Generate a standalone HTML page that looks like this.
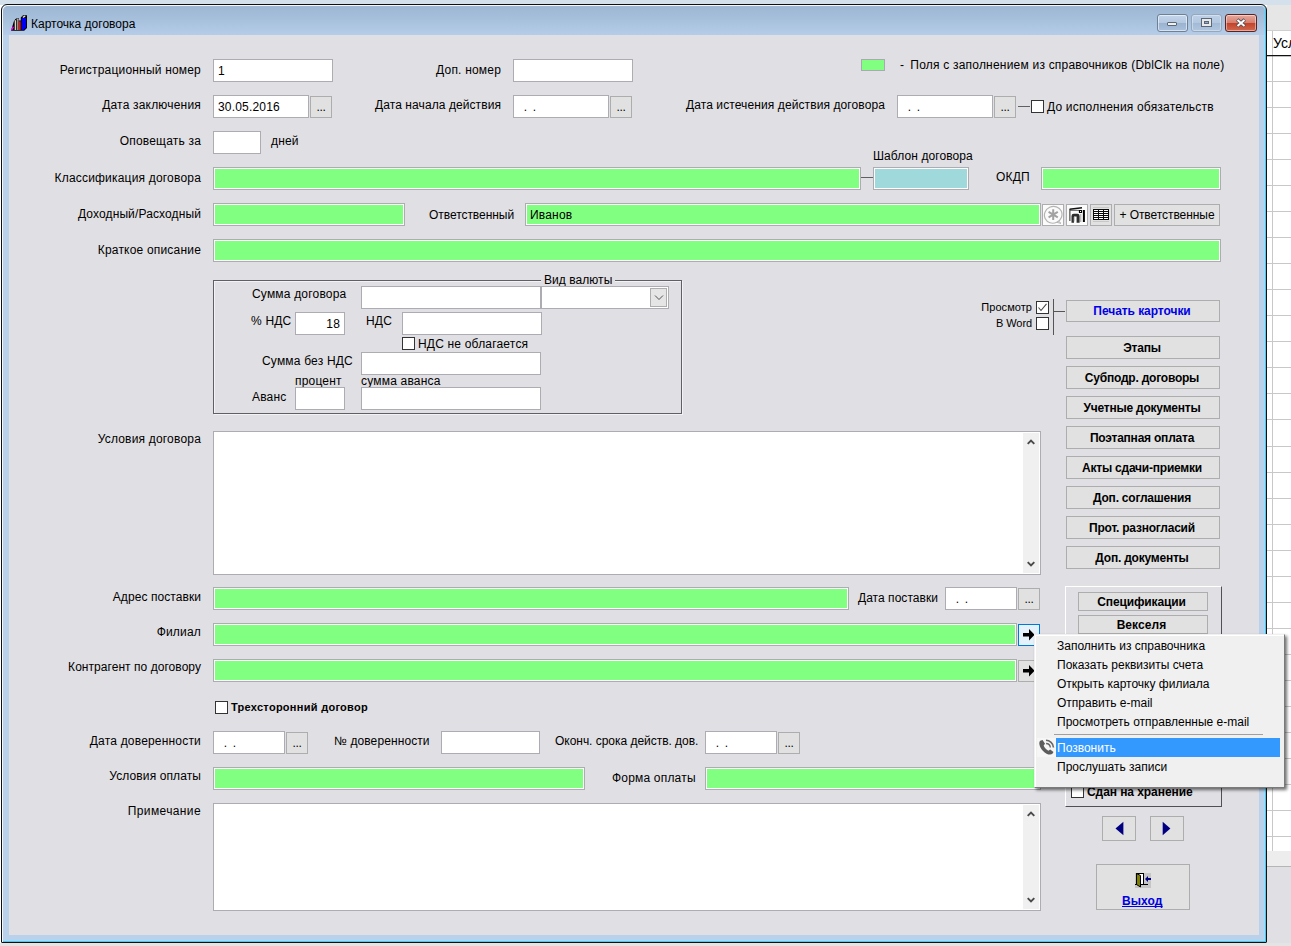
<!DOCTYPE html>
<html lang="ru">
<head>
<meta charset="utf-8">
<title>Карточка договора</title>
<style>
html,body{margin:0;padding:0;}
body{width:1291px;height:946px;overflow:hidden;background:#fff;font-family:"Liberation Sans",sans-serif;font-size:12px;color:#000;position:relative;}
#root{position:absolute;left:0;top:0;width:1291px;height:946px;overflow:hidden;}
.abs{position:absolute;}
.t{position:absolute;white-space:nowrap;height:14px;line-height:14px;font-size:12px;letter-spacing:.19px;}
.in{position:absolute;box-sizing:border-box;border:1px solid #acacb2;background:#fff;white-space:nowrap;overflow:hidden;font-size:12px;line-height:22px;padding-left:4px;letter-spacing:.19px;}
.g{background:#80ff80;box-shadow:inset 0 0 0 1px #fff;}
.bt{position:absolute;box-sizing:border-box;border:1px solid #adadad;background:#e1e1e1;text-align:center;white-space:nowrap;font-size:12px;overflow:hidden;letter-spacing:.19px;}
.cb{position:absolute;box-sizing:border-box;width:13px;height:13px;border:1px solid #333;background:#fff;}
.mi{position:absolute;left:22px;white-space:nowrap;font-size:12px;height:16px;line-height:16px;color:#000;}
.b{font-weight:bold;letter-spacing:-.22px;}
.d{letter-spacing:1.17px;margin-left:5.8px;}
.e{letter-spacing:-.33px;}
</style>
</head>
<body>
<div id="root">
<div class="" style="position:absolute;left:0px;top:0px;width:1291px;height:5px;background:#d5e0ed"></div>
<div class="" style="position:absolute;left:1267px;top:5px;width:24px;height:26px;background:#e6e6e6"></div>
<div class="" style="position:absolute;left:1267px;top:31px;width:24px;height:820px;background:#fff"></div>
<div class="" style="position:absolute;left:1267px;top:851px;width:24px;height:15px;background:#ededed"></div>
<div class="" style="position:absolute;left:1267px;top:866px;width:24px;height:1px;background:#b5b5b5"></div>
<div class="" style="position:absolute;left:1267px;top:867px;width:24px;height:79px;background:#e0dfe3"></div>
<div class="" style="position:absolute;left:0px;top:943px;width:1291px;height:3px;background:#e4e4e4"></div>
<div class="" style="position:absolute;left:1272px;top:31px;width:1px;height:820px;background:#c8c8c8"></div>
<div class="" style="position:absolute;left:1267px;top:81px;width:24px;height:1px;background:#c8c8c8"></div>
<div class="" style="position:absolute;left:1267px;top:107px;width:24px;height:1px;background:#c8c8c8"></div>
<div class="" style="position:absolute;left:1267px;top:133px;width:24px;height:1px;background:#c8c8c8"></div>
<div class="" style="position:absolute;left:1267px;top:159px;width:24px;height:1px;background:#c8c8c8"></div>
<div class="" style="position:absolute;left:1267px;top:185px;width:24px;height:1px;background:#c8c8c8"></div>
<div class="" style="position:absolute;left:1267px;top:211px;width:24px;height:1px;background:#c8c8c8"></div>
<div class="" style="position:absolute;left:1267px;top:237px;width:24px;height:1px;background:#c8c8c8"></div>
<div class="" style="position:absolute;left:1267px;top:263px;width:24px;height:1px;background:#c8c8c8"></div>
<div class="" style="position:absolute;left:1267px;top:289px;width:24px;height:1px;background:#c8c8c8"></div>
<div class="" style="position:absolute;left:1267px;top:315px;width:24px;height:1px;background:#c8c8c8"></div>
<div class="" style="position:absolute;left:1267px;top:341px;width:24px;height:1px;background:#c8c8c8"></div>
<div class="" style="position:absolute;left:1267px;top:367px;width:24px;height:1px;background:#c8c8c8"></div>
<div class="" style="position:absolute;left:1267px;top:393px;width:24px;height:1px;background:#c8c8c8"></div>
<div class="" style="position:absolute;left:1267px;top:419px;width:24px;height:1px;background:#c8c8c8"></div>
<div class="" style="position:absolute;left:1267px;top:446px;width:24px;height:1px;background:#c8c8c8"></div>
<div class="" style="position:absolute;left:1267px;top:472px;width:24px;height:1px;background:#c8c8c8"></div>
<div class="" style="position:absolute;left:1267px;top:498px;width:24px;height:1px;background:#c8c8c8"></div>
<div class="" style="position:absolute;left:1267px;top:524px;width:24px;height:1px;background:#c8c8c8"></div>
<div class="" style="position:absolute;left:1267px;top:550px;width:24px;height:1px;background:#c8c8c8"></div>
<div class="" style="position:absolute;left:1267px;top:576px;width:24px;height:1px;background:#c8c8c8"></div>
<div class="" style="position:absolute;left:1267px;top:602px;width:24px;height:1px;background:#c8c8c8"></div>
<div class="" style="position:absolute;left:1267px;top:628px;width:24px;height:1px;background:#c8c8c8"></div>
<div class="" style="position:absolute;left:1267px;top:654px;width:24px;height:1px;background:#c8c8c8"></div>
<div class="" style="position:absolute;left:1267px;top:680px;width:24px;height:1px;background:#c8c8c8"></div>
<div class="" style="position:absolute;left:1267px;top:706px;width:24px;height:1px;background:#c8c8c8"></div>
<div class="" style="position:absolute;left:1267px;top:732px;width:24px;height:1px;background:#c8c8c8"></div>
<div class="" style="position:absolute;left:1267px;top:758px;width:24px;height:1px;background:#c8c8c8"></div>
<div class="" style="position:absolute;left:1267px;top:784px;width:24px;height:1px;background:#c8c8c8"></div>
<div class="" style="position:absolute;left:1267px;top:810px;width:24px;height:1px;background:#c8c8c8"></div>
<div class="" style="position:absolute;left:1267px;top:836px;width:24px;height:1px;background:#c8c8c8"></div>
<div class="" style="position:absolute;left:1267px;top:55px;width:24px;height:1px;background:#111"></div>
<div class="" style="position:absolute;left:1267px;top:56px;width:24px;height:1px;background:rgba(0,0,0,.25)"></div>
<div class="" style="position:absolute;left:1267px;top:30px;width:24px;height:1px;background:#cfcfcf"></div>
<span class="abs" style="left:1273px;top:34px;font-size:14px;line-height:18px;white-space:nowrap">Усл</span>
<div class="abs" style="left:1px;top:4px;width:1266px;height:939px;box-sizing:border-box;border:1px solid #111;border-radius:6px 6px 1px 1px;background:#b9d1ea;box-shadow:inset 1px 1px 0 #f4f8fc, inset -1px -1px 0 #3fcdf5;"></div>
<div class="abs" style="left:3px;top:6px;width:1262px;height:29px;border-radius:5px 5px 0 0;background:linear-gradient(#9db6d3 0%,#a6bfdb 45%,#b5cde8 100%);"></div>
<div class="" style="position:absolute;left:9px;top:35px;width:1250px;height:900px;background:#e0dfe3"></div>
<svg class="abs" style="left:11px;top:15px" width="17" height="17" viewBox="0 0 17 17">
<path d="M0 15.7 L2.8 6.5 L4.2 4.3 L5.6 3.3 L8 3.3 L8 5.6 L9.8 5.6 L9.8 2.5 L12 0.2 L16 0.2 L16 13 L13.2 15.7 Z" fill="#000"/>
<rect x="3.7" y="5.2" width="1.5" height="9.8" fill="#ddd5cc"/>
<rect x="6" y="4.4" width="1.6" height="10.6" fill="#9a9088"/>
<rect x="5.6" y="3.7" width="2" height="0.9" fill="#e8e0d8"/>
<rect x="8" y="6.3" width="1.6" height="8.7" fill="#ff1010"/>
<path d="M10.6 3 H15 V12.6 L12.7 15 H10.6Z" fill="#0000f0"/>
<path d="M11.8 2.4 L14.2 1.1" stroke="#e8e0d8" stroke-width="1.2"/>
<path d="M0.5 15.3 L2.3 11.7" stroke="#ff00ff" stroke-width="1.4"/>
</svg>
<span class="abs" style="left:31px;top:17px;font-size:12px;line-height:14px;white-space:nowrap">Карточка договора</span>
<div class="abs" style="left:1157px;top:14px;width:31px;height:18px;box-sizing:border-box;border:1px solid #6d8196;border-radius:3px;background:linear-gradient(#c4d5e9 0%,#b4c8e0 48%,#9ab3d0 52%,#aac1dc 100%);box-shadow:inset 0 0 0 1px rgba(255,255,255,.55)"><div class="abs" style="left:9px;top:7px;width:8px;height:2px;background:#f0f0f0;border:1px solid #5a6776;border-radius:1px"></div></div>
<div class="abs" style="left:1191px;top:14px;width:31px;height:18px;box-sizing:border-box;border:1px solid #93a7bd;border-radius:3px;background:linear-gradient(#bdd0e6 0%,#b3c8e0 48%,#a3bad6 52%,#b0c6df 100%);box-shadow:inset 0 0 0 1px rgba(255,255,255,.35)"><svg class="abs" style="left:9px;top:3px" width="12" height="10" viewBox="0 0 12 10"><rect x="0.5" y="0.5" width="10" height="8" fill="#e9e9e9" stroke="#5a6776"/><rect x="3.5" y="3.5" width="4" height="2" fill="#8fa8cc" stroke="#5a6776"/></svg></div>
<div class="abs" style="left:1225px;top:14px;width:32px;height:18px;box-sizing:border-box;border:1px solid #5c2222;border-radius:3px;background:linear-gradient(#e5a99c 0%,#d67f70 48%,#c3432b 52%,#d0694f 100%);box-shadow:inset 0 0 0 1px rgba(255,255,255,.45)"><svg class="abs" style="left:9px;top:3px" width="12" height="10" viewBox="0 0 12 10"><path d="M2.2 1.6 L9.8 8.2 M9.8 1.6 L2.2 8.2" stroke="#4a4a55" stroke-width="3.4"/><path d="M2.5 1.9 L9.5 7.9 M9.5 1.9 L2.5 7.9" stroke="#fff" stroke-width="2"/></svg></div>
<span class="t " style="right:1090px;top:63px;">Регистрационный номер</span>
<div class="in " style="left:213px;top:59px;width:120px;height:23px;">1</div>
<span class="t " style="right:790px;top:63px;">Доп. номер</span>
<div class="in " style="left:513px;top:59px;width:120px;height:23px;"></div>
<div class="" style="position:absolute;left:861px;top:59px;width:24px;height:12px;background:#80ff80;border:1px solid #a9a9b4;box-sizing:border-box"></div>
<span class="t " style="left:900px;top:58px;letter-spacing:.21px">-&nbsp; <span style="margin-left:-1px">Поля с заполнением из справочников (DblClk на поле)</span></span>
<span class="t " style="right:1090px;top:98px;">Дата заключения</span>
<div class="in " style="left:213px;top:95px;width:96px;height:23px;">30.05.2016</div>
<div class="bt " style="left:310px;top:96px;width:22px;height:22px;line-height:20px;"><span class="e">...</span></div>
<span class="t " style="right:790px;top:98px;letter-spacing:0.08px">Дата начала действия</span>
<div class="in " style="left:513px;top:95px;width:96px;height:23px;"><span class="d">.&nbsp;.</span></div>
<div class="bt " style="left:610px;top:96px;width:22px;height:22px;line-height:20px;"><span class="e">...</span></div>
<span class="t " style="right:406px;top:98px;letter-spacing:0.1px">Дата истечения действия договора</span>
<div class="in " style="left:897px;top:95px;width:96px;height:23px;"><span class="d">.&nbsp;.</span></div>
<div class="bt " style="left:994px;top:96px;width:22px;height:22px;line-height:20px;"><span class="e">...</span></div>
<div class="" style="position:absolute;left:1018px;top:106px;width:12px;height:1px;background:#606060"></div>
<div class="cb" style="left:1031px;top:100px"></div>
<span class="t " style="left:1047px;top:100px;">До исполнения обязательств</span>
<span class="t " style="right:1090px;top:134px;">Оповещать за</span>
<div class="in " style="left:213px;top:131px;width:48px;height:23px;"></div>
<span class="t " style="left:271px;top:134px;">дней</span>
<span class="t " style="right:1090px;top:171px;">Классификация договора</span>
<div class="in g" style="left:213px;top:167px;width:648px;height:23px;"></div>
<div class="" style="position:absolute;left:861px;top:177px;width:12px;height:1px;background:#606060"></div>
<span class="t " style="left:873px;top:149px;letter-spacing:.09px">Шаблон договора</span>
<div class="in " style="left:873px;top:167px;width:96px;height:23px;background:#9fd9dc;box-shadow:inset 0 0 0 1px #fff"></div>
<span class="t " style="left:996px;top:170px;">ОКДП</span>
<div class="in g" style="left:1041px;top:167px;width:180px;height:23px;"></div>
<span class="t " style="right:1090px;top:207px;letter-spacing:0.12px">Доходный/Расходный</span>
<div class="in g" style="left:213px;top:203px;width:192px;height:23px;"></div>
<span class="t " style="left:429px;top:208px;letter-spacing:-.05px">Ответственный</span>
<div class="in g" style="left:525px;top:203px;width:516px;height:23px;">Иванов</div>
<div class="bt " style="left:1042px;top:204px;width:22px;height:22px;line-height:20px;background:#fbfbfb"><svg class="abs" style="left:0;top:0" width="20" height="20" viewBox="0 0 20 20"><path d="M15.2 15.6 L18 18.4 L13.2 17.2" fill="#fbfbfb" stroke="#b4b4b4" stroke-width="1"/><ellipse cx="10.2" cy="9.8" rx="8.9" ry="8.3" transform="rotate(-25 10.2 9.8)" fill="#fbfbfb" stroke="#b4b4b4" stroke-width="1.2"/><path d="M10.2 4.2 V15 M5.6 6.9 L14.8 12.3 M14.8 6.9 L5.6 12.3" stroke="#a2a2a2" stroke-width="2"/></svg></div>
<div class="bt " style="left:1066px;top:204px;width:22px;height:22px;line-height:20px;background:#fbfbfb"><svg class="abs" style="left:0;top:0" width="20" height="20" viewBox="0 0 20 20"><path d="M2.9 4.2 V16" stroke="#222" stroke-width="1"/><path d="M2.6 4.3 L15 2.7" stroke="#111" stroke-width="1.4"/><path d="M3 5.4 H12" stroke="#444" stroke-width=".8"/><rect x="15.9" y="5" width="2" height="12" fill="#000"/><rect x="11.9" y="5" width="3.2" height="3" fill="#000"/><rect x="13" y="6" width="1" height="1" fill="#fff"/><path d="M4.5 17.8 V11 Q4.5 8.8 6.8 8.8 H10.5 Q12.6 8.8 12.6 11 V17.8 H9.6 V11.5 H7 V17.8Z" fill="#2e2e2e"/><path d="M7 12 V16.5 M13.8 9 V17" stroke="#888" stroke-width=".8"/></svg></div>
<div class="bt " style="left:1090px;top:204px;width:22px;height:22px;line-height:20px;"><svg class="abs" style="left:0;top:0" width="20" height="20" viewBox="0 0 20 20" shape-rendering="crispEdges"><rect x="2" y="2" width="16" height="1" fill="#c8c8c8"/><rect x="2" y="16" width="16" height="1" fill="#c8c8c8"/><rect x="2" y="4" width="16" height="11" fill="#0a0a0a"/><g fill="#fff"><rect x="3" y="5" width="4" height="1"/><rect x="8" y="5" width="4" height="1"/><rect x="13" y="5" width="4" height="1"/><rect x="3" y="7" width="4" height="1"/><rect x="8" y="7" width="4" height="1"/><rect x="13" y="7" width="4" height="1"/><rect x="3" y="9" width="4" height="1"/><rect x="8" y="9" width="4" height="1"/><rect x="13" y="9" width="4" height="1"/><rect x="3" y="11" width="4" height="1"/><rect x="8" y="11" width="4" height="1"/><rect x="13" y="11" width="4" height="1"/><rect x="3" y="13" width="4" height="1"/><rect x="8" y="13" width="4" height="1"/><rect x="13" y="13" width="4" height="1"/></g></svg></div>
<div class="bt " style="left:1114px;top:204px;width:106px;height:22px;line-height:20px;letter-spacing:-.06px">+ Ответственные</div>
<span class="t " style="right:1090px;top:243px;">Краткое описание</span>
<div class="in g" style="left:213px;top:239px;width:1008px;height:23px;"></div>
<div class="abs" style="left:213px;top:280px;width:469px;height:134px;box-sizing:border-box;border:1px solid #606064;box-shadow:1px 1px 0 rgba(255,255,255,.6), inset 1px 1px 0 rgba(255,255,255,.6)"></div>
<span class="t" style="left:541px;top:273px;background:#e0dfe3;padding:0 3px;letter-spacing:.05px">Вид валюты</span>
<span class="t " style="left:252px;top:287px;">Сумма договора</span>
<div class="in " style="left:361px;top:286px;width:180px;height:23px;"></div>
<div class="in " style="left:541px;top:286px;width:128px;height:23px;"></div>
<div class="abs" style="left:650px;top:288px;width:17px;height:19px;box-sizing:border-box;border:1px solid #adadad;background:#e5e5e5"><svg class="abs" style="left:3px;top:5px" width="10" height="6" viewBox="0 0 10 6"><path d="M1 1.5 L5 5.5 L9 1.5" fill="none" stroke="#505050" stroke-width="1"/></svg></div>
<span class="t " style="left:251px;top:314px;">% НДС</span>
<div class="in " style="left:295px;top:312px;width:50px;height:23px;text-align:right;padding-right:4px">18</div>
<span class="t " style="left:366px;top:314px;">НДС</span>
<div class="in " style="left:402px;top:312px;width:140px;height:23px;"></div>
<div class="cb" style="left:402px;top:337px"></div>
<span class="t " style="left:418px;top:337px;">НДС не облагается</span>
<span class="t " style="left:262px;top:354px;">Сумма без НДС</span>
<div class="in " style="left:361px;top:352px;width:180px;height:23px;"></div>
<span class="t " style="left:295px;top:374px;">процент</span>
<span class="t " style="left:361px;top:374px;">сумма аванса</span>
<span class="t " style="left:252px;top:390px;">Аванс</span>
<div class="in " style="left:295px;top:387px;width:50px;height:23px;"></div>
<div class="in " style="left:361px;top:387px;width:180px;height:23px;"></div>
<span class="t " style="right:259px;top:300px;font-size:11px;letter-spacing:.06px">Просмотр</span>
<div class="cb" style="left:1036px;top:301px"><svg width="13" height="13" viewBox="0 0 13 13" style="position:absolute;left:-1px;top:-1px"><path d="M2.5 6.5 L5 9.5 L10.5 2.8" fill="none" stroke="#444" stroke-width="1.05"/></svg></div>
<span class="t " style="right:259px;top:316px;font-size:11px;letter-spacing:-.09px">В Word</span>
<div class="cb" style="left:1036px;top:317px"></div>
<div class="" style="position:absolute;left:1053px;top:299px;width:1px;height:36px;background:#555"></div>
<div class="" style="position:absolute;left:1054px;top:311px;width:11px;height:1px;background:#555"></div>
<div class="bt b" style="left:1066px;top:300px;width:154px;height:22px;line-height:20px;color:#0000e8;letter-spacing:-.06px;padding-right:2px">Печать карточки</div>
<div class="bt b" style="left:1066px;top:336px;width:154px;height:23px;line-height:21px;padding:1px 2px 0 0">Этапы</div>
<div class="bt b" style="left:1066px;top:366px;width:154px;height:23px;line-height:21px;padding:1px 2px 0 0">Субподр. договоры</div>
<div class="bt b" style="left:1066px;top:396px;width:154px;height:23px;line-height:21px;padding:1px 2px 0 0">Учетные документы</div>
<div class="bt b" style="left:1066px;top:426px;width:154px;height:23px;line-height:21px;padding:1px 2px 0 0">Поэтапная оплата</div>
<div class="bt b" style="left:1066px;top:456px;width:154px;height:23px;line-height:21px;padding:1px 2px 0 0">Акты сдачи-приемки</div>
<div class="bt b" style="left:1066px;top:486px;width:154px;height:23px;line-height:21px;padding:1px 2px 0 0">Доп. соглашения</div>
<div class="bt b" style="left:1066px;top:516px;width:154px;height:23px;line-height:21px;padding:1px 2px 0 0">Прот. разногласий</div>
<div class="bt b" style="left:1066px;top:546px;width:154px;height:23px;line-height:21px;padding:1px 2px 0 0">Доп. документы</div>
<span class="t " style="right:1090px;top:432px;">Условия договора</span>
<div class="in " style="left:213px;top:431px;width:828px;height:144px;"></div>
<div class="" style="position:absolute;left:1023px;top:433px;width:16px;height:140px;background:#f0f0f0"></div>
<svg class="abs" style="left:1026px;top:438px" width="10" height="7" viewBox="0 0 10 7"><path d="M1.7 5.8 L5 2.5 L8.3 5.8" fill="none" stroke="#4a4a4a" stroke-width="1.9"/></svg>
<svg class="abs" style="left:1026px;top:561px" width="10" height="7" viewBox="0 0 10 7"><path d="M1.7 1.2 L5 4.5 L8.3 1.2" fill="none" stroke="#4a4a4a" stroke-width="1.9"/></svg>
<span class="t " style="right:1090px;top:590px;letter-spacing:0.07px">Адрес поставки</span>
<div class="in g" style="left:213px;top:587px;width:636px;height:23px;"></div>
<span class="t " style="left:858px;top:591px;letter-spacing:0.04px">Дата поставки</span>
<div class="in " style="left:945px;top:587px;width:72px;height:23px;"><span class="d">.&nbsp;.</span></div>
<div class="bt " style="left:1018px;top:588px;width:22px;height:22px;line-height:20px;"><span class="e">...</span></div>
<span class="t " style="right:1090px;top:625px;">Филиал</span>
<div class="in g" style="left:213px;top:623px;width:804px;height:23px;"></div>
<div class="bt " style="left:1018px;top:624px;width:22px;height:22px;line-height:20px;border:1px solid #0078d7;background:#e5f1fb"><svg class="abs" style="left:0;top:0" width="20" height="20" viewBox="0 0 20 20"><path d="M4 8.1 H10 V3.9 L15.6 9.75 L10 15.6 V11.4 H4Z" fill="#000"/></svg></div>
<span class="t " style="right:1090px;top:660px;letter-spacing:0.05px">Контрагент по договору</span>
<div class="in g" style="left:213px;top:659px;width:804px;height:23px;"></div>
<div class="bt " style="left:1018px;top:660px;width:22px;height:22px;line-height:20px;"><svg class="abs" style="left:0;top:0" width="20" height="20" viewBox="0 0 20 20"><path d="M4 8.1 H10 V3.9 L15.6 9.75 L10 15.6 V11.4 H4Z" fill="#000"/></svg></div>
<div class="cb" style="left:215px;top:701px"></div>
<span class="t b" style="left:231px;top:700px;font-size:11px;letter-spacing:.28px">Трехсторонний договор</span>
<span class="t " style="right:1090px;top:734px;">Дата доверенности</span>
<div class="in " style="left:213px;top:731px;width:72px;height:23px;"><span class="d">.&nbsp;.</span></div>
<div class="bt " style="left:286px;top:732px;width:22px;height:22px;line-height:20px;"><span class="e">...</span></div>
<span class="t " style="left:334px;top:734px;letter-spacing:0.1px">№ доверенности</span>
<div class="in " style="left:441px;top:731px;width:99px;height:23px;"></div>
<span class="t " style="left:555px;top:734px;letter-spacing:-0.03px">Оконч. срока действ. дов.</span>
<div class="in " style="left:705px;top:731px;width:72px;height:23px;"><span class="d">.&nbsp;.</span></div>
<div class="bt " style="left:778px;top:732px;width:22px;height:22px;line-height:20px;"><span class="e">...</span></div>
<span class="t " style="right:1090px;top:769px;letter-spacing:0.1px">Условия оплаты</span>
<div class="in g" style="left:213px;top:767px;width:372px;height:23px;"></div>
<span class="t " style="left:612px;top:771px;">Форма оплаты</span>
<div class="in g" style="left:705px;top:767px;width:336px;height:23px;"></div>
<span class="t " style="right:1090px;top:804px;letter-spacing:.38px">Примечание</span>
<div class="in " style="left:213px;top:803px;width:828px;height:108px;"></div>
<div class="" style="position:absolute;left:1023px;top:805px;width:16px;height:104px;background:#f0f0f0"></div>
<svg class="abs" style="left:1026px;top:810px" width="10" height="7" viewBox="0 0 10 7"><path d="M1.7 5.8 L5 2.5 L8.3 5.8" fill="none" stroke="#4a4a4a" stroke-width="1.9"/></svg>
<svg class="abs" style="left:1026px;top:897px" width="10" height="7" viewBox="0 0 10 7"><path d="M1.7 1.2 L5 4.5 L8.3 1.2" fill="none" stroke="#4a4a4a" stroke-width="1.9"/></svg>
<div class="abs" style="left:1065px;top:586px;width:157px;height:221px;box-sizing:border-box;border:1px solid;border-color:#fff #505056 #505056 #fff;"></div>
<div class="bt b" style="left:1078px;top:592px;width:130px;height:19px;line-height:17px;padding:1px 3px 0 0;letter-spacing:-.12px">Спецификации</div>
<div class="bt b" style="left:1078px;top:615px;width:130px;height:19px;line-height:17px;padding:1px 3px 0 0;letter-spacing:.08px">Векселя</div>
<div class="cb" style="left:1071px;top:785px"></div>
<span class="t b" style="left:1087px;top:785px;letter-spacing:-.07px">Сдан на хранение</span>
<div class="bt " style="left:1102px;top:816px;width:34px;height:25px;line-height:23px;"><svg class="abs" style="left:0;top:0" width="32" height="23" viewBox="0 0 32 23"><path d="M20.4 4.8 V18.2 L12.5 11.5Z" fill="#000080"/></svg></div>
<div class="bt " style="left:1150px;top:816px;width:34px;height:25px;line-height:23px;"><svg class="abs" style="left:0;top:0" width="32" height="23" viewBox="0 0 32 23"><path d="M11.7 4.8 V18.2 L19.4 11.5Z" fill="#000080"/></svg></div>
<div class="bt " style="left:1096px;top:864px;width:94px;height:46px;line-height:44px;"></div>
<svg class="abs" style="left:1135px;top:873px" width="16" height="15" viewBox="0 0 16 15" shape-rendering="crispEdges"><rect width="16" height="15" fill="#c6c6c6"/><rect x="1.5" y="0.5" width="7" height="11" fill="#fff" stroke="#000"/><path d="M0 11.5 H13" stroke="#000"/><path d="M1.5 0.5 L5.5 2.5 V14 L1.5 11.5Z" fill="#808000" stroke="#000" shape-rendering="auto"/><path d="M10 6 L13 3 V5 H16 V7 H13 V9Z" fill="#000080" shape-rendering="auto"/></svg>
<span class="t b" style="left:1122px;top:894px;font-size:12px;color:#0000e0;text-decoration:underline;text-decoration-skip-ink:none;letter-spacing:.1px">Выход</span>
<div class="abs" style="left:1034px;top:634px;width:251px;height:154px;box-sizing:border-box;border:1px solid;border-color:#f0f0f0 #7a7a7a #7a7a7a #f0f0f0;background:#f0f0f0;box-shadow:inset 1px 1px 0 #fff, 2px 2px 3px rgba(0,0,0,.55)">
<span class="mi" style="top:3px">Заполнить из справочника</span>
<span class="mi" style="top:22px">Показать реквизиты счета</span>
<span class="mi" style="top:41px">Открыть карточку филиала</span>
<span class="mi" style="top:60px">Отправить e-mail</span>
<span class="mi" style="top:79px">Просмотреть отправленные e-mail</span>
<div class="abs" style="left:19px;top:99px;width:209px;height:1px;background:#a0a0a0"></div>
<div class="abs" style="left:21px;top:103px;width:224px;height:19px;background:#3399ff"></div>
<span class="mi" style="top:105px;color:#fff">Позвонить</span>
<span class="mi" style="top:124px">Прослушать записи</span>
<svg class="abs" style="left:2px;top:103px" width="19" height="19" viewBox="0 0 18 18"><rect width="18" height="18" fill="#f6f6f6"/><path d="M3 2.5 C1.5 4 2 8 5.5 12 C9 15.8 13 16.5 14.8 14.8 L15.6 13.3 L12.5 10.8 L10.8 12 C9 11.2 6.8 8.8 6.3 7 L7.6 5.5 L5.3 2Z" fill="#5c5c5c"/><path d="M8.5 2.2 C12 2.2 15.5 5.2 15.6 9" fill="none" stroke="#666" stroke-width="1.5"/><path d="M8.6 5.2 C10.8 5.3 12.5 7 12.6 9" fill="none" stroke="#666" stroke-width="1.3"/></svg>
</div>
</div>
</body>
</html>
